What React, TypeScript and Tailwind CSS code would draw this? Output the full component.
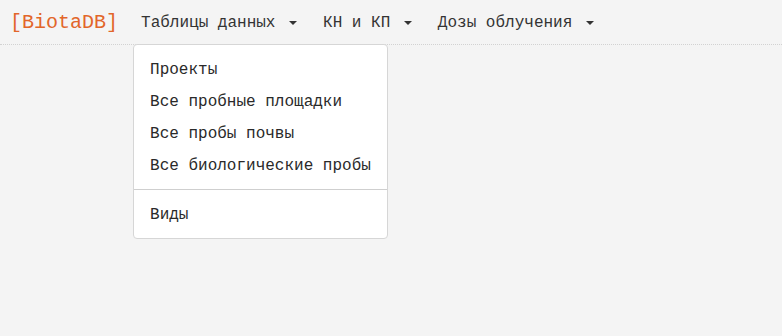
import { Fragment } from "react"

const menus = [
  { title: "Таблицы данных", open: true },
  { title: "КН и КП", open: false },
  { title: "Дозы облучения", open: false },
]

const tableItems = ["Проекты", "Все пробные площадки", "Все пробы почвы", "Все биологические пробы"]

function Caret() {
  return (
    <span className="ml-[13.6px] inline-block h-0 w-0 border-x-[4px] border-t-[4px] border-x-transparent border-t-[#333] align-middle" />
  )
}

export default function App() {
  return (
    <div className="h-[336px] w-full bg-[#f4f4f4] font-['Liberation_Mono','DejaVu_Sans_Mono',monospace] text-[#333]">
      <header className="flex h-[45px] items-stretch border-b border-dotted border-[#d2d2d2] pl-[10px]">
        <a href="#" className="mr-[15px] self-center pt-[2px] text-[20px] leading-[30px] text-[#e2662a]">
          [BiotaDB]
        </a>
        <ul className="flex gap-[10px]">
          {menus.map((menu) => (
            <li key={menu.title} className="relative flex items-center">
              <a href="#" className="px-2 pt-[2px] text-[16px] leading-6">
                {menu.title}
                <Caret />
              </a>
              {menu.open && (
                <div className="absolute left-0 top-full z-10 w-max rounded border border-[#d6d6d6] bg-white py-2 text-[#2a2a2a]">
                  {tableItems.map((item) => (
                    <a key={item} href="#" className="block px-4 pb-[3px] pt-[5px] text-[16px] leading-6">
                      {item}
                    </a>
                  ))}
                  <Fragment>
                    <div className="my-2 border-t border-[#cfcfcf]" />
                    <a href="#" className="block px-4 pb-[3px] pt-[5px] text-[16px] leading-6">
                      Виды
                    </a>
                  </Fragment>
                </div>
              )}
            </li>
          ))}
        </ul>
      </header>
    </div>
  )
}
